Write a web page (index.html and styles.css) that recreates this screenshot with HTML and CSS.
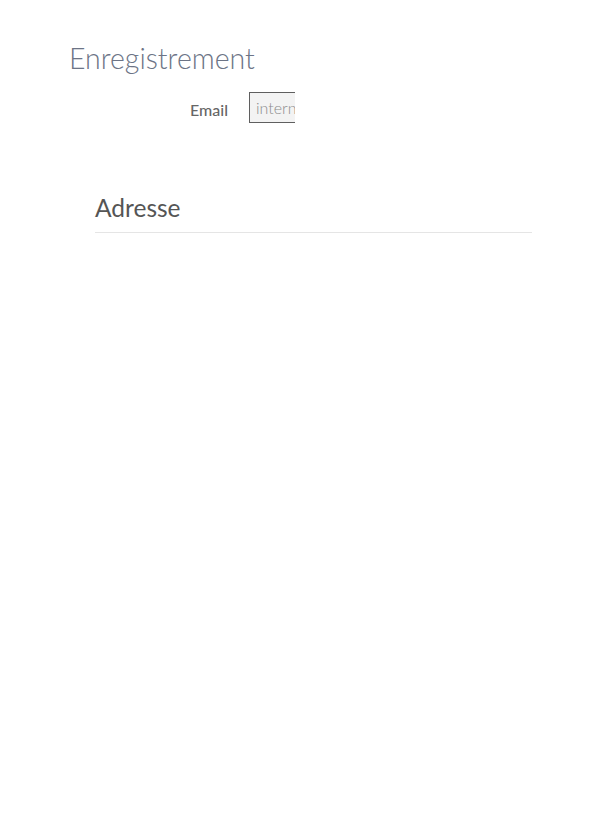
FILE: index.html
```html
<!DOCTYPE html>
<html lang="fr">
<head>
    <meta charset="UTF-8">
    <title>Enregistrement</title>
    <link rel="stylesheet" href="styles.css">
</head>
<body>
<div id="wrapper">
    <h1 class="page-title">Enregistrement</h1>

    <div class="form-row">
        <label class="form-label" for="email">Email</label>
        <div class="input-clip">
            <input class="form-input" id="email" type="text" placeholder="internaute@exemple.fr">
        </div>
    </div>

    <div class="section">
        <h2 class="section-title">Adresse</h2>
    </div>
</div>
</body>
</html>
```
FILE: styles.css
```css
body {
    font-family: Lato, "Open Sans", sans-serif;
    background-color: #ffffff;
    color: #555555;
    margin: 0;
    padding: 0;
}
#wrapper {
    padding: 40px 0 0 69px;
}
.page-title {
    font-weight: 300;
    font-size: 28.5px;
    color: #6c7486;
    margin: 0;
    line-height: 36px;
}
.form-row {
    display: flex;
    align-items: center;
    margin-top: 16px;
    padding-left: 121px;
}
.form-label {
    font-size: 16px;
    font-weight: 500;
    color: #666666;
    width: 59px;
    padding-top: 3px;
}
.input-clip {
    width: 46px;
    height: 31px;
    overflow: hidden;
}
.form-input {
    font-family: Lato, "Open Sans", sans-serif;
    font-size: 16px;
    font-weight: 300;
    width: 200px;
    height: 31px;
    box-sizing: border-box;
    padding: 0 6px;
    border: 1px solid #5f5f5f;
    background-color: #f3f3f3;
    color: #8c8c8c;
}
.form-input::placeholder {
    color: #8c8c8c;
}
.section {
    margin: 69px 0 0 26px;
    width: 437px;
    border-bottom: 1px solid #e5e5e5;
}
.section-title {
    font-size: 24.5px;
    font-weight: 400;
    color: #555555;
    margin: 0;
    padding-bottom: 8px;
    line-height: 32px;
}
```
